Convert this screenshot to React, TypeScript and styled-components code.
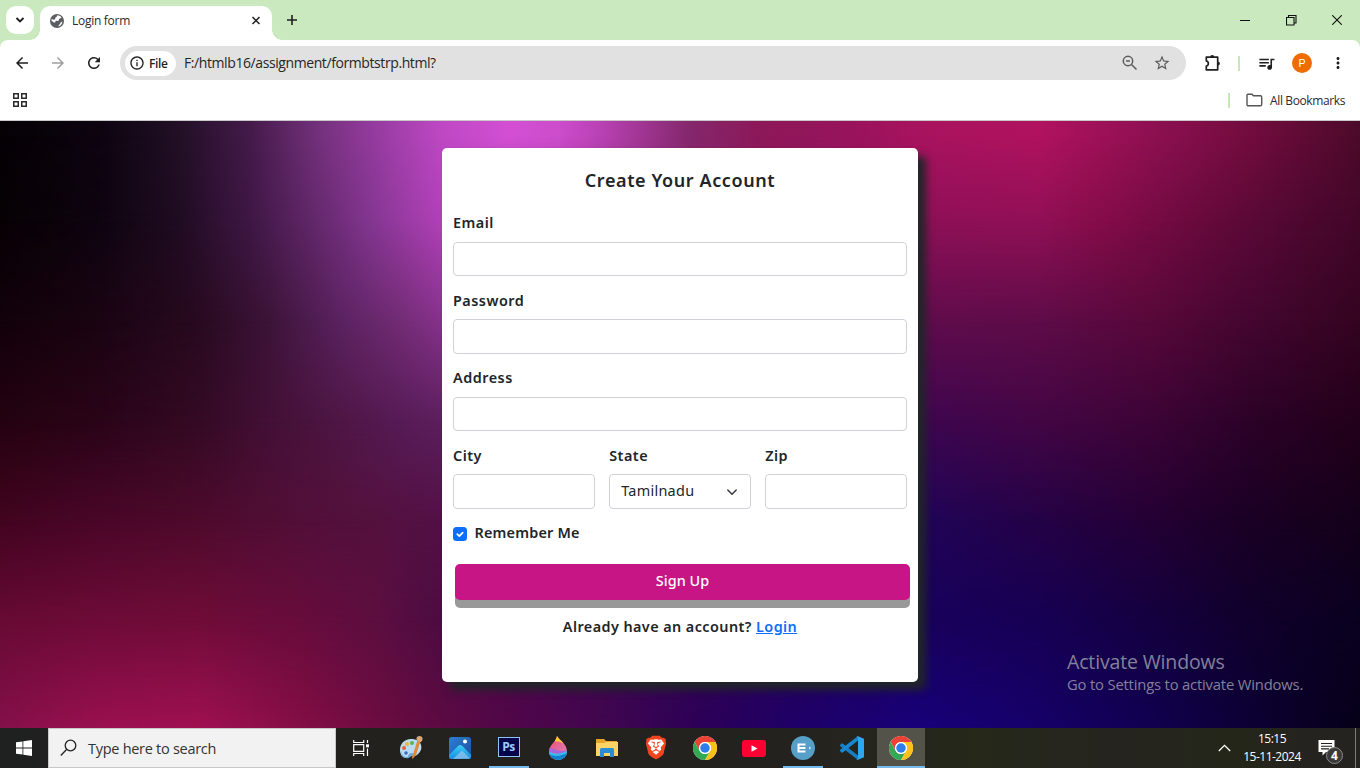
import React from 'react';
import styled, { createGlobalStyle, css } from 'styled-components';
import {
  MdArrowBack, MdArrowForward, MdRefresh, MdQueueMusic,
  MdMoreVert, MdStarBorder, MdInfoOutline,
} from 'react-icons/md';
import { SiBrave } from 'react-icons/si';

const ui = `'Open Sans', 'Noto Sans', sans-serif`;
const form = `'Noto Sans', 'Open Sans', sans-serif`;

const GlobalStyle = createGlobalStyle`
  * { box-sizing: border-box; }
  body { margin: 0; overflow: hidden; font-family: ${ui}; }
  svg { display: block; flex: none; }
`;

const Screen = styled.div`
  width: 1360px;
  height: 768px;
  display: flex;
  flex-direction: column;
  overflow: hidden;
`;

/* ---------- browser chrome ---------- */

const TabStrip = styled.div`
  height: 40px;
  flex: none;
  display: flex;
  align-items: flex-end;
  background: #cae9be;
  padding-left: 6px;
`;

const TabSearch = styled.div`
  width: 28px;
  height: 28px;
  margin: 0 6px 6px 0;
  border-radius: 10px;
  background: #fff;
  display: grid;
  place-items: center;
`;

const Tab = styled.div`
  position: relative;
  width: 232px;
  height: 34px;
  padding: 0 9px 5px;
  border-radius: 10px 10px 0 0;
  background: #fff;
  display: flex;
  align-items: center;
  &::before, &::after {
    content: '';
    position: absolute;
    bottom: 0;
    width: 10px;
    height: 10px;
  }
  &::before { left: -10px; background: radial-gradient(circle at 0 0, transparent 9.5px, #fff 10px); }
  &::after { right: -10px; background: radial-gradient(circle at 100% 0, transparent 9.5px, #fff 10px); }
`;

const TabTitle = styled.span`
  flex: 1;
  margin-left: 7px;
  font-size: 12px;
  letter-spacing: -0.28px;
  color: #2b2b2b;
`;

const NewTab = styled.div`
  margin: 0 auto 14px 14px;
`;

const WindowButtons = styled.div`
  display: flex;
  height: 40px;
`;

const WindowButton = styled.div`
  width: 46px;
  height: 40px;
  display: grid;
  place-items: center;
`;

const ToolbarBack = styled.div`
  flex: none;
  background: #cae9be;
`;

const Toolbar = styled.div`
  height: 46px;
  display: flex;
  align-items: center;
  padding: 0 12px 0 13px;
  color: #1f1f1f;
  background: #fff;
  border-radius: 8px 8px 0 0;
`;

const NavButton = styled.div<{ $dim?: boolean }>`
  width: 18px;
  flex: none;
  margin-right: 18px;
  display: grid;
  place-items: center;
  color: ${p => (p.$dim ? '#a0a0a0' : '#1f1f1f')};
`;

const AddressBar = styled.div`
  width: 1066px;
  flex: none;
  height: 34px;
  margin-left: -1px;
  padding: 0 15px 0 5px;
  border-radius: 17px;
  background: #e1e1e1;
  display: flex;
  align-items: center;
  color: #5c5c5c;
`;

const FileChip = styled.div`
  width: 51px;
  height: 25px;
  padding-left: 4px;
  border-radius: 13px;
  background: #fff;
  display: flex;
  align-items: center;
  gap: 4px;
  font-size: 12px;
  font-weight: 600;
  letter-spacing: -0.4px;
  color: #1f1f1f;
`;

const Url = styled.span`
  flex: 1;
  margin-left: 8px;
  padding-bottom: 1px;
  font-size: 14px;
  letter-spacing: -0.41px;
  color: #262626;
`;

const BarIcon = styled.div<{ $left: number }>`
  flex: none;
  margin-left: ${p => p.$left}px;
`;

const GreenRule = styled.div<{ $left: number; $right: number }>`
  width: 2px;
  flex: none;
  height: 15px;
  margin: 0 ${p => p.$right}px 0 ${p => p.$left}px;
  background: #c6e7ba;
`;

const Avatar = styled.div`
  width: 20px;
  flex: none;
  height: 20px;
  margin-left: 16px;
  border-radius: 50%;
  background: #ef6c00;
  color: #fff;
  font: 11px/21px Roboto, sans-serif;
  text-align: center;
`;

const BookmarksBar = styled.div`
  height: 35px;
  flex: none;
  display: flex;
  align-items: center;
  padding: 0 15px 6px 13px;
  background: #fff;
  border-bottom: 1px solid #c9c9c9;
  font-size: 12px;
  color: #2b2b2b;
`;

const Spacer = styled.div`
  flex: 1;
`;

const AllBookmarks = styled.span`
  width: 75px;
  margin-left: 7px;
  white-space: nowrap;
  letter-spacing: -0.37px;
`;

/* ---------- web page ---------- */

const Page = styled.main`
  position: relative;
  flex: 1;
  min-height: 0;
  display: grid;
  background: #050104;
`;

const Layer = styled.div`
  grid-area: 1 / 1;
`;

const CardArea = styled.div`
  grid-area: 1 / 1;
  z-index: 1;
  padding-top: 27px;
`;

/* Mesh gradient: each row is a horizontal ramp, faded in between its y and the previous one. */
type Row = { y: number; stops: [number, string][] };
const mesh: Row[] = [
  { y: 15, stops: [[0, '#050104'], [100, '#0d0410'], [180, '#221026'], [250, '#441a4a'], [320, '#74317c'], [370, '#923a9c'], [442, '#be48c4'], [510, '#d24fd3'], [560, '#cc4ccb'], [600, '#b842b4'], [690, '#84276c'], [760, '#8c1858'], [850, '#98135c'], [918, '#a8135e'], [1040, '#b0125f'], [1150, '#8e1052'], [1250, '#720c3e'], [1360, '#4c0a2a']] },
  { y: 100, stops: [[0, '#070104'], [100, '#0e0410'], [180, '#200c22'], [250, '#3e1744'], [320, '#66296e'], [370, '#823690'], [442, '#b240b8'], [680, '#8a2070'], [918, '#8e1058'], [1040, '#901055'], [1100, '#850c4a'], [1200, '#680a3c'], [1290, '#500832'], [1360, '#420628']] },
  { y: 200, stops: [[0, '#12010a'], [100, '#1a0412'], [200, '#280a20'], [270, '#3c1438'], [340, '#5a2260'], [400, '#722c74'], [442, '#86328c'], [680, '#701460'], [918, '#600c4c'], [1040, '#5e0c48'], [1150, '#58083a'], [1250, '#440630'], [1360, '#340420']] },
  { y: 300, stops: [[0, '#240210'], [100, '#2a0418'], [200, '#340a24'], [270, '#431036'], [340, '#4e1644'], [400, '#561b56'], [442, '#5c1f5c'], [918, '#3e0650'], [1040, '#430644'], [1150, '#3c0436'], [1250, '#2c0228'], [1360, '#22001a']] },
  { y: 400, stops: [[0, '#42041f'], [100, '#4a0628'], [200, '#4e0a2c'], [300, '#520f38'], [380, '#54113e'], [442, '#521046'], [918, '#200458'], [1040, '#240246'], [1150, '#240034'], [1250, '#1a0024'], [1360, '#14001a']] },
  { y: 500, stops: [[0, '#680a34'], [100, '#6e0b38'], [200, '#700c38'], [300, '#680c3c'], [380, '#5c0e40'], [442, '#4c0c42'], [918, '#18005c'], [1040, '#160054'], [1150, '#140040'], [1250, '#10002c'], [1360, '#0a0020']] },
  { y: 607, stops: [[0, '#84104a'], [100, '#9a1050'], [200, '#a01052'], [300, '#840e46'], [380, '#6c0c40'], [442, '#5c0a42'], [520, '#50064a'], [600, '#420650'], [700, '#2c0058'], [800, '#1e0068'], [918, '#18007a'], [1040, '#160068'], [1150, '#100050'], [1250, '#0c0034'], [1360, '#060018']] },
];

const meshStyle = (row: Row, i: number): React.CSSProperties => {
  const from = i === 0 ? -1 : mesh[i - 1].y;
  const mask = i === 0 ? 'none' : `linear-gradient(180deg, transparent ${from}px, #000 ${row.y}px)`;
  return {
    background: `linear-gradient(90deg, ${row.stops.map(([x, c]) => `${c} ${x}px`).join(', ')})`,
    maskImage: mask,
  };
};

const Card = styled.form`
  width: 476px;
  height: 534px;
  margin: 0 auto;
  padding: 20px 11px 0;
  border-radius: 5px;
  background: #fff;
  box-shadow: 8px 8px 8px #212529;
  color: #212529;
  font-family: ${form};
  font-size: 14.4px;
  letter-spacing: 0.5px;
`;

const Title = styled.h1`
  margin: 0 0 20px;
  font-size: 18px;
  line-height: 24px;
  font-weight: 600;
  letter-spacing: 0.6px;
  text-align: center;
`;

const Field = styled.div`
  flex: 1;
  min-width: 0;
  margin-bottom: 13.4px;
`;

const Label = styled.label`
  display: block;
  height: 21.6px;
  margin-bottom: 8.2px;
  line-height: 21.6px;
  font-weight: 600;
`;

const control = css`
  display: flex;
  align-items: center;
  width: 100%;
  height: 34.4px;
  border: 1px solid #ced2d6;
  border-radius: 4px;
  background: #fff;
`;

const Input = styled.input`
  ${control}
  padding: 0 11px;
  font: inherit;
  outline: none;
`;

const Select = styled.div`
  ${control}
  justify-content: space-between;
  padding: 0 12px 0 11px;
  letter-spacing: 0.3px;
`;

const SelectValue = styled.span`
  padding-bottom: 3px;
`;

const FieldRow = styled.div`
  display: flex;
  gap: 14.4px;
`;

const Remember = styled.label`
  height: 21.6px;
  display: flex;
  align-items: center;
  gap: 7.5px;
  font-weight: 600;
  letter-spacing: 0.2px;
`;

const RememberText = styled.span`
  padding-bottom: 2px;
`;

const Check = styled.span`
  width: 14px;
  height: 14px;
  margin-top: 1px;
  border-radius: 3.5px;
  background: #0d6efd;
  display: grid;
  place-items: center;
`;

const SignUp = styled.button`
  display: block;
  width: 455px;
  height: 36px;
  margin: 20px 0 16px 2px;
  padding: 0 0 3px;
  border: 0;
  border-radius: 5px;
  background: #c71585;
  box-shadow: 0 8px 0 #999;
  color: #fff;
  font: 500 14.4px ${form};
  letter-spacing: 0.05px;
`;

const Footer = styled.p`
  margin: 0;
  line-height: 22px;
  text-align: center;
  font-weight: 600;
  letter-spacing: 0.43px;
`;

const Link = styled.a`
  color: #0d6efd;
  text-decoration: underline;
`;

const Watermark = styled.div`
  position: absolute;
  z-index: 1;
  left: 1067px;
  top: 528px;
  white-space: nowrap;
  color: #85809a;
`;

const WatermarkTitle = styled.div`
  font-size: 19.5px;
  line-height: 26px;
  letter-spacing: -0.15px;
`;

const WatermarkText = styled.div`
  font-size: 14.8px;
  line-height: 18px;
  letter-spacing: -0.18px;
`;

/* ---------- taskbar ---------- */

const Taskbar = styled.footer`
  height: 40px;
  flex: none;
  display: flex;
  background: linear-gradient(90deg, #1f2020 0, #23211e 25%, #24221f 58%, #26281a 72%, #25241f 82%, #242619 91%, #252320 96%);
  color: #fff;
`;

const Slot = styled.div<{ $width?: number; $open?: boolean; $active?: boolean }>`
  width: ${p => p.$width ?? 49}px;
  height: 40px;
  display: flex;
  align-items: center;
  justify-content: center;
  background: ${p => (p.$active ? '#53534a' : 'transparent')};
  ${p => p.$open && css`box-shadow: inset 0 -2px #76b9ed;`}
`;

const SearchBox = styled.div`
  width: 288px;
  height: 40px;
  padding-left: 11px;
  display: flex;
  align-items: center;
  gap: 11px;
  background: #f2f2f2;
  border: 1px solid #c8c8c8;
  color: #333;
  font-size: 14.5px;
  letter-spacing: -0.28px;
`;

const Clock = styled.div`
  width: 60px;
  margin-left: 11px;
  font-size: 12px;
  line-height: 18px;
  padding-top: 2px;
  text-align: center;
  white-space: nowrap;
  letter-spacing: -0.5px;
`;

const Notice = styled.div`
  position: relative;
  width: 53px;
  padding: 11px 0 0 16px;
`;

const NoticeCount = styled.span`
  position: absolute;
  left: 24px;
  top: 19px;
  width: 17px;
  height: 17px;
  border: 1px solid #8b8b88;
  border-radius: 50%;
  background: #3a3a38;
  font-size: 12px;
  font-weight: 700;
  line-height: 15px;
  text-align: center;
`;

const ShowDesktop = styled.div`
  width: 5px;
  border-left: 1px solid #7d7d78;
`;

/* ---------- drawings ---------- */

const GlobeIcon = () => (
  <svg width="16" height="16" viewBox="0 0 16 16">
    <circle cx="8" cy="8" r="7" fill="#5a5d61" />
    <path d="M8.200 2.300c1.600 0 3.400.8 4.300 2.200-.6 1-1.500.5-2.200 1.300-.7.700.1 1.500-.9 2-.9.400-2-.3-2.800.2-.6.500.3 1.200-.6 1.500C4.800 9.600 3.300 8.200 2.400 7.400c.1-.6.200-1 .4-1.400 1 .5 2 .9 2.900.5.9-.5.200-1.500.9-2.100.6-.6 1.400-.4 1.600-2.100z" fill="#fff" />
    <path d="M13.300 8.500c0 2.300-1.500 4.200-3.600 4.900-.4-.9.200-1.600.9-2 .8-.6.500-1.400 1-2 .5-.5 1.100-.4 1.700-.9z" fill="#fff" />
  </svg>
);

const PuzzleIcon = () => (
  <svg width="20" height="20" viewBox="0 0 20 20">
    <path d="M3.300 4.200h11.400v12.600H3.300v-3.700c2.700-.6 2.700-4.600 0-5.200z" fill="none" stroke="#1f1f1f" strokeWidth="1.700" strokeLinejoin="round" />
    <path d="M7.100 4.200a2.100 2.100 0 0 1 4.200 0zM14.800 8.400a2.100 2.100 0 0 1 0 4.200z" fill="#1f1f1f" />
  </svg>
);

const ChromeLogo = () => (
  <svg width="24" height="24" viewBox="0 0 48 48">
    <circle cx="24" cy="24" r="24" fill="#fff" />
    <path d="M3.200 12A24 24 0 0 1 44.800 12H24a12 12 0 0 0-10.400 18z" fill="#ea4335" />
    <path d="M3.200 12A24 24 0 0 0 24 48L34.400 30A12 12 0 0 1 13.600 30z" fill="#34a853" />
    <path d="M44.800 12A24 24 0 0 1 24 48L34.400 30A12 12 0 0 0 24 12z" fill="#fbc116" />
    <circle cx="24" cy="24" r="12" fill="#fff" />
    <circle cx="24" cy="24" r="9.500" fill="#2f7de9" />
  </svg>
);

const PaintLogo = () => (
  <svg width="26" height="26" viewBox="0 0 26 26">
    <path d="M13 4C6 4 2 9 2 15c0 5 3 8 6 8 3 0 2-4 5-4 3 0 3 3 6 1 4-3 5-7 4-10-1-4-5-6-10-6z" fill="#b9dcf2" />
    <path d="M3 16c1 4 3 6 6 6 2 0 1-4 4-4 2 0 4 1 6-1-1 4-4 4-5 4-3 1-3 3-6 2-3 0-5-3-5-7z" fill="#6fa8d4" />
    <circle cx="6" cy="13" r="2" fill="#e8643a" />
    <circle cx="9" cy="9" r="2" fill="#f2b233" />
    <circle cx="14" cy="8" r="2" fill="#62b34a" />
    <circle cx="8" cy="18" r="1.800" fill="#356ec4" />
    <path d="M19.500 5l3 1-4.500 14-3.500 4c-1-1 0-4 1-6z" fill="#e08a35" />
    <path d="M18.500 4.500c-.5-2 1-3.500 3-3.500 3 0 4 3 2 5.500l-1.500 1z" fill="#d7a878" />
  </svg>
);

const PhotosLogo = () => (
  <svg width="22" height="22" viewBox="0 0 22 22">
    <defs>
      <linearGradient id="ph" x1="0" y1="0" x2="1" y2="1"><stop stopColor="#2f7fd0" /><stop offset="1" stopColor="#174ea6" /></linearGradient>
      <linearGradient id="hill" x1="0" y1="0" x2="0" y2="1"><stop stopColor="#38cdf5" /><stop offset="1" stopColor="#1d8de0" /></linearGradient>
    </defs>
    <rect width="22" height="22" rx="2.500" fill="url(#ph)" />
    <path d="M0 18l9-9c1.400-1.400 3-1.400 4.400 0l8.600 9v1.500a2.500 2.500 0 0 1-2.500 2.500h-17A2.500 2.500 0 0 1 0 19.500z" fill="url(#hill)" />
    <path d="M4 22l9-8.500 8 8z" fill="#8fc5ee" opacity=".75" />
    <circle cx="16" cy="4.500" r="2" fill="#fff" />
  </svg>
);

const PsBadge = styled.div`
  width: 22px;
  height: 20px;
  margin-bottom: 3px;
  border: 1.5px solid #8fc3f7;
  background: #04054b;
  color: #9ccbfa;
  font-size: 12px;
  font-weight: 700;
  letter-spacing: -0.5px;
  line-height: 18px;
  text-align: center;
`;

const Paint3dLogo = () => (
  <svg width="20" height="24" viewBox="0 0 20 24">
    <defs>
      <clipPath id="drop"><path d="M9 0c3 5 10 8 10 15.500A9 8.500 0 0 1 1 15.500C1 9 8 6 9 0z" /></clipPath>
      <linearGradient id="pk" x1="0" y1="0" x2="1" y2="1"><stop stopColor="#f0476c" /><stop offset="1" stopColor="#d88bc4" /></linearGradient>
    </defs>
    <g clipPath="url(#drop)">
      <rect width="20" height="24" fill="url(#pk)" />
      <path d="M7 0h13v8.500C16 8 13 5 7 5.500z" fill="#fdc830" />
      <path d="M0 11.500c6 0 10 5.500 20 2.500v4c-8 2-14-2-20-2z" fill="#a964d6" />
      <path d="M0 14.500c6 5 12 3.500 20 0V24H0z" fill="#38bdf0" />
      <path d="M0 17.500c8 4.500 13 2 20-.5v7H0z" fill="#1581cb" />
    </g>
  </svg>
);

const FolderLogo = () => (
  <svg width="22" height="20" viewBox="0 0 22 20">
    <path d="M0 1h8l2 2h11v7H0z" fill="#e6a52a" />
    <path d="M0 5h8l2-1h12v14H0z" fill="#fdd367" />
    <path d="M4 19v-7.500q0-1.500 1.500-1.500h11q1.500 0 1.500 1.500V19h-4v-4H8v4z" fill="#2b8bd9" />
  </svg>
);

const BraveLogo = () => (
  <svg width="24" height="26" viewBox="0 0 24 26">
    <path d="M7 2.500h10l4 4-2 12.500L12 23.500 5 19 3 6.500z" fill="#fff" />
    <g transform="translate(0 .5)"><SiBrave size={24} color="#f4441e" /></g>
  </svg>
);

const YouTubeLogo = () => (
  <svg width="24" height="17" viewBox="0 0 24 17">
    <rect width="24" height="17" rx="3" fill="#ff0033" />
    <path d="M9.500 5.200l6 3.300-6 3.300z" fill="#fff" />
  </svg>
);

const ELogo = () => (
  <svg width="24" height="24" viewBox="0 0 24 24">
    <circle cx="12" cy="12" r="12" fill="#559fc9" />
    <path d="M6.500 8.500h8M6.500 12h8M6.500 15.500h8M7.500 7.500v9" stroke="#fff" strokeWidth="2" fill="none" />
    <path d="M18.300 10.500l1.700 1.500-1.700 1.500z" fill="#fff" />
  </svg>
);

const VsCodeLogo = () => (
  <svg width="24" height="24" viewBox="0 0 24 24">
    <path d="M0 9l1.500-1.500q.6-.5 1.200 0L18 19.500V24L.2 10.300z" fill="#1a7dc2" />
    <path d="M0 15l1.500 1.500q.6.500 1.200 0L18 4.500V0L.2 13.700z" fill="#1688d2" />
    <path d="M17.500 0L24 2.800v18.400L17.500 24q-1 0-1.500-.8 2 .8 2-1.200V2q0-2-2-1.200z" fill="#2aa8f2" />
  </svg>
);

const taskApps: { key: string; icon: React.ReactNode; open?: boolean }[] = [
  { key: 'paint', icon: <PaintLogo /> },
  { key: 'photos', icon: <PhotosLogo /> },
  { key: 'ps', icon: <PsBadge>Ps</PsBadge>, open: true },
  { key: 'paint3d', icon: <Paint3dLogo /> },
  { key: 'files', icon: <FolderLogo /> },
  { key: 'brave', icon: <BraveLogo /> },
  { key: 'chrome', icon: <ChromeLogo /> },
  { key: 'youtube', icon: <YouTubeLogo /> },
  { key: 'e', icon: <ELogo />, open: true },
  { key: 'code', icon: <VsCodeLogo /> },
];

const AppSlot = styled(Slot)`
  width: 40px;
  margin: 0 4.5px;
`;

const ActiveSlot = styled(Slot)`
  width: 48px;
  margin-left: 1px;
`;

const TextField = ({ label, type = 'text' }: { label: string; type?: string }) => (
  <Field>
    <Label>{label}</Label>
    <Input type={type} />
  </Field>
);

export default function App() {
  return (
    <Screen>
      <GlobalStyle />
      <TabStrip>
        <TabSearch>
          <svg width="10" height="8" viewBox="0 0 10 8"><path d="M1.500 2L5 5.500 8.500 2" fill="none" stroke="#1f1f1f" strokeWidth="1.800" /></svg>
        </TabSearch>
        <Tab>
          <GlobeIcon />
          <TabTitle>Login form</TabTitle>
          <svg width="14" height="14" viewBox="0 0 14 14"><path d="M3.500 3l7 7M10.500 3l-7 7" stroke="#1f1f1f" strokeWidth="1.500" /></svg>
        </Tab>
        <NewTab>
          <svg width="12" height="12" viewBox="0 0 12 12"><path d="M6 1v10M1 6h10" stroke="#1f1f1f" strokeWidth="1.600" /></svg>
        </NewTab>
        <WindowButtons>
          <WindowButton><svg width="10" height="11" viewBox="0 0 10 11"><path d="M0 5.500h10" stroke="#111" /></svg></WindowButton>
          <WindowButton><svg width="11" height="11" viewBox="0 0 11 11"><path d="M.5 2.500h7.500v7.500H.5zM2.500 2.500V.5H10V8H8" fill="none" stroke="#111" strokeWidth="1.100" /></svg></WindowButton>
          <WindowButton><svg width="10" height="10" viewBox="0 0 10 10"><path d="M.2.2l9.600 9.600M9.800.2L.2 9.800" stroke="#111" strokeWidth="1.100" /></svg></WindowButton>
        </WindowButtons>
      </TabStrip>

      <ToolbarBack>
        <Toolbar>
          <NavButton><MdArrowBack size={18} /></NavButton>
          <NavButton $dim><MdArrowForward size={18} /></NavButton>
          <NavButton><MdRefresh size={18} /></NavButton>
          <AddressBar>
            <FileChip><MdInfoOutline size={16} />File</FileChip>
            <Url>F:/htmlb16/assignment/formbtstrp.html?</Url>
            <svg width="18" height="18" viewBox="0 0 18 18">
              <circle cx="7" cy="7" r="4.700" fill="none" stroke="#5c5c5c" strokeWidth="1.500" />
              <path d="M10.500 10.500l5 5M5 7h4" stroke="#5c5c5c" strokeWidth="1.500" />
            </svg>
            <BarIcon $left={14}><MdStarBorder size={18} /></BarIcon>
          </AddressBar>
          <BarIcon $left={17}><PuzzleIcon /></BarIcon>
          <GreenRule $left={15} $right={17} />
          <MdQueueMusic size={19} />
          <Avatar>P</Avatar>
          <BarIcon $left={17}><MdMoreVert size={18} /></BarIcon>
        </Toolbar>
      </ToolbarBack>
      <BookmarksBar>
        <svg width="14" height="14" viewBox="0 0 14 14">
          <path d="M.75.75h4.500v4.500H.75zM8.750.75h4.500v4.500h-4.500zM.75 8.750h4.500v4.500H.75zM8.750 8.750h4.500v4.500h-4.500z" fill="none" stroke="#2a2a2a" strokeWidth="1.500" />
        </svg>
        <Spacer />
        <GreenRule $left={0} $right={16} />
        <svg width="17" height="14" viewBox="0 0 17 14">
          <path d="M1 2.200Q1 1.200 2 1.200h4l1.500 1.600h7q1.200 0 1.200 1.200v7.500q0 1.200-1.200 1.200H2.200Q1 12.700 1 11.500z" fill="none" stroke="#555" strokeWidth="1.400" />
        </svg>
        <AllBookmarks>All Bookmarks</AllBookmarks>
      </BookmarksBar>

      <Page>
        {mesh.map((row, i) => <Layer key={row.y} style={meshStyle(row, i)} />)}
        <CardArea>
          <Card>
            <Title>Create Your Account</Title>
            <TextField label="Email" type="email" />
            <TextField label="Password" type="password" />
            <TextField label="Address" />
            <FieldRow>
              <TextField label="City" />
              <Field>
                <Label>State</Label>
                <Select>
                  <SelectValue>Tamilnadu</SelectValue>
                  <svg width="12" height="12" viewBox="0 0 12 12"><path d="M1.800 4L6 8.200 10.200 4" fill="none" stroke="#343a40" strokeWidth="1.500" strokeLinecap="round" strokeLinejoin="round" /></svg>
                </Select>
              </Field>
              <TextField label="Zip" />
            </FieldRow>
            <Remember>
              <Check><svg width="10" height="10" viewBox="0 0 10 10"><path d="M2.300 5.200l2 2L7.700 3.600" fill="none" stroke="#fff" strokeWidth="1.700" strokeLinecap="round" strokeLinejoin="round" /></svg></Check>
              <RememberText>Remember Me</RememberText>
            </Remember>
            <SignUp type="button">Sign Up</SignUp>
            <Footer>Already have an account? <Link>Login</Link></Footer>
          </Card>
        </CardArea>
        <Watermark>
          <WatermarkTitle>Activate Windows</WatermarkTitle>
          <WatermarkText>Go to Settings to activate Windows.</WatermarkText>
        </Watermark>
      </Page>

      <Taskbar>
        <Slot $width={48}>
          <svg width="16" height="16" viewBox="0 0 16 16"><path d="M0 2.300L6.500 1.400v6.100H0zM7.300 1.300L16 0v7.500H7.300zM0 8.400h6.500v6.200L0 13.700zM7.300 8.400H16V16l-8.700-1.200z" fill="#fff" /></svg>
        </Slot>
        <SearchBox>
          <svg width="17" height="18" viewBox="0 0 17 18"><circle cx="10.500" cy="6.500" r="5.300" fill="none" stroke="#222" strokeWidth="1.300" /><path d="M6.800 10.300L.8 16.500" stroke="#222" strokeWidth="1.300" /></svg>
          Type here to search
        </SearchBox>
        <Slot $width={50}>
          <svg width="17" height="16" viewBox="0 0 17 16"><path d="M.7 0v2.500h10V0M.7 16v-2.500h10V16M.7 4.700h10v6.600H.7zM14.500 0v3M14.500 8.500V16" fill="none" stroke="#fff" strokeWidth="1.200" /><path d="M13 4.300h3v3h-3z" fill="#fff" /></svg>
        </Slot>
        {taskApps.map(a => <AppSlot key={a.key} $open={a.open}>{a.icon}</AppSlot>)}
        <ActiveSlot $open $active><ChromeLogo /></ActiveSlot>
        <Spacer />
        <Slot $width={14}>
          <svg width="13" height="8" viewBox="0 0 13 8"><path d="M.8 7l5.700-5.700L12.200 7" fill="none" stroke="#fff" strokeWidth="1.300" /></svg>
        </Slot>
        <Clock>15:15<br />15-11-2024</Clock>
        <Notice>
          <svg width="17" height="17" viewBox="0 0 17 17"><path d="M.5 1h16v12H8l-3.500 3.500V13h-4z" fill="#fff" /><path d="M3 4.500h11M3 7.200h11M3 9.900h8" stroke="#22211e" strokeWidth="1.100" /></svg>
          <NoticeCount>4</NoticeCount>
        </Notice>
        <ShowDesktop />
      </Taskbar>
    </Screen>
  );
}
